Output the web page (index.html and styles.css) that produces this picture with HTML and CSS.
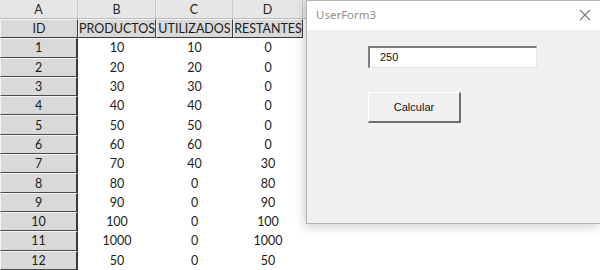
FILE: index.html
```html
<!DOCTYPE html>
<html lang="es">
<head>
    <meta charset="UTF-8">
    <title>Hoja1 - UserForm3</title>
    <link rel="stylesheet" href="styles.css">
</head>
<body>
    <div class="sheet">
        <div class="row col-heads">
            <div class="cell">A</div>
            <div class="cell">B</div>
            <div class="cell">C</div>
            <div class="cell">D</div>
            <div class="cell"></div>
        </div>
        <div class="row fields">
            <div class="cell">ID</div>
            <div class="cell">PRODUCTOS</div>
            <div class="cell">UTILIZADOS</div>
            <div class="cell">RESTANTES</div>
            <div class="cell blank"></div>
        </div>
        <div class="row"><div class="cell id">1</div><div class="cell">10</div><div class="cell">10</div><div class="cell">0</div><div class="cell"></div></div>
        <div class="row"><div class="cell id">2</div><div class="cell">20</div><div class="cell">20</div><div class="cell">0</div><div class="cell"></div></div>
        <div class="row"><div class="cell id">3</div><div class="cell">30</div><div class="cell">30</div><div class="cell">0</div><div class="cell"></div></div>
        <div class="row"><div class="cell id">4</div><div class="cell">40</div><div class="cell">40</div><div class="cell">0</div><div class="cell"></div></div>
        <div class="row"><div class="cell id">5</div><div class="cell">50</div><div class="cell">50</div><div class="cell">0</div><div class="cell"></div></div>
        <div class="row"><div class="cell id">6</div><div class="cell">60</div><div class="cell">60</div><div class="cell">0</div><div class="cell"></div></div>
        <div class="row"><div class="cell id">7</div><div class="cell">70</div><div class="cell">40</div><div class="cell">30</div><div class="cell"></div></div>
        <div class="row"><div class="cell id">8</div><div class="cell">80</div><div class="cell">0</div><div class="cell">80</div><div class="cell"></div></div>
        <div class="row"><div class="cell id">9</div><div class="cell">90</div><div class="cell">0</div><div class="cell">90</div><div class="cell"></div></div>
        <div class="row"><div class="cell id">10</div><div class="cell">100</div><div class="cell">0</div><div class="cell">100</div><div class="cell"></div></div>
        <div class="row"><div class="cell id">11</div><div class="cell">1000</div><div class="cell">0</div><div class="cell">1000</div><div class="cell"></div></div>
        <div class="row"><div class="cell id">12</div><div class="cell">50</div><div class="cell">0</div><div class="cell">50</div><div class="cell"></div></div>
    </div>

    <!-- the form window floats over the sheet -->
    <div class="userform">
        <div class="titlebar">
            <span class="title">UserForm3</span>
            <svg class="close" width="12" height="12" viewBox="0 0 12 12">
                <path d="M1 1 L11 11 M11 1 L1 11" stroke="#7a7a7a" stroke-width="1.1" fill="none"/>
            </svg>
        </div>
        <div class="form-body">
            <div class="textbox">250</div>
            <div class="cmd-button">Calcular</div>
        </div>
    </div>
</body>
</html>
```

FILE: styles.css
```css
body {
    margin: 0;
    width: 600px;
    height: 270px;
    overflow: hidden;
    background-color: #ffffff;
    font-family: 'Lato', 'Liberation Sans', sans-serif;
    position: relative;
}
.sheet {
    width: 600px;
}
.row {
    display: grid;
    grid-template-columns: 78px 78px 77px 70px 1fr;
    height: 19.3px;
}
.cell {
    box-sizing: border-box;
    display: flex;
    align-items: center;
    justify-content: center;
    font-size: 12.5px;
    color: #1c1c1c;
}
.col-heads {
    height: 19px;
}
.col-heads .cell {
    background-color: #e6e6e6;
    border-right: 1px solid #c9c9c9;
    border-bottom: 1px solid #bcbcbc;
    color: #262626;
}
.fields .cell {
    background-color: #d9d9d9;
    border-top: 1px solid #f2f2f2;
    border-left: 1px solid #f2f2f2;
    border-right: 1px solid #3a3a3a;
    border-bottom: 1px solid #3a3a3a;
}
.fields .blank {
    background-color: #ffffff;
    border: none;
}
.cell.id {
    background-color: #d9d9d9;
    border-top: 1px solid #f4f4f4;
    border-left: 1px solid #f4f4f4;
    border-right: 2px solid #3a3a3a;
    border-bottom: 1px solid #4a4a4a;
}
.userform {
    position: absolute;
    left: 306px;
    top: 0;
    width: 293px;
    height: 222px;
    border: 1px solid #b4b4b4;
    background-color: #f0f0f0;
    box-shadow: -2px 3px 10px rgba(0, 0, 0, 0.18);
    font-family: 'Liberation Sans', sans-serif;
}
.titlebar {
    height: 29px;
    background-color: #ffffff;
    display: flex;
    align-items: center;
    justify-content: space-between;
    padding: 0 9px 0 9px;
}
.title {
    font-family: 'Noto Sans', sans-serif;
    font-size: 11.5px;
    color: #8f8f8f;
    margin-top: -3px;
}
.close {
    margin-top: -2px;
}
.form-body {
    padding: 16px 0 0 61px;
    display: flex;
    flex-direction: column;
    align-items: flex-start;
}
.textbox {
    box-sizing: border-box;
    width: 169px;
    height: 22px;
    background-color: #ffffff;
    border-top: 2px solid #7c7c7c;
    border-left: 2px solid #7c7c7c;
    border-right: 1px solid #e3e3e3;
    border-bottom: 1px solid #e3e3e3;
    font-size: 11px;
    color: #111;
    padding: 3px 0 0 10px;
}
.cmd-button {
    box-sizing: border-box;
    margin-top: 24px;
    width: 93px;
    height: 31px;
    border-top: 1px solid #ffffff;
    border-left: 1px solid #ffffff;
    border-right: 2px solid #6e6e6e;
    border-bottom: 2px solid #6e6e6e;
    background-color: #f0f0f0;
    font-size: 11px;
    color: #111;
    display: flex;
    align-items: center;
    justify-content: center;
}
```
